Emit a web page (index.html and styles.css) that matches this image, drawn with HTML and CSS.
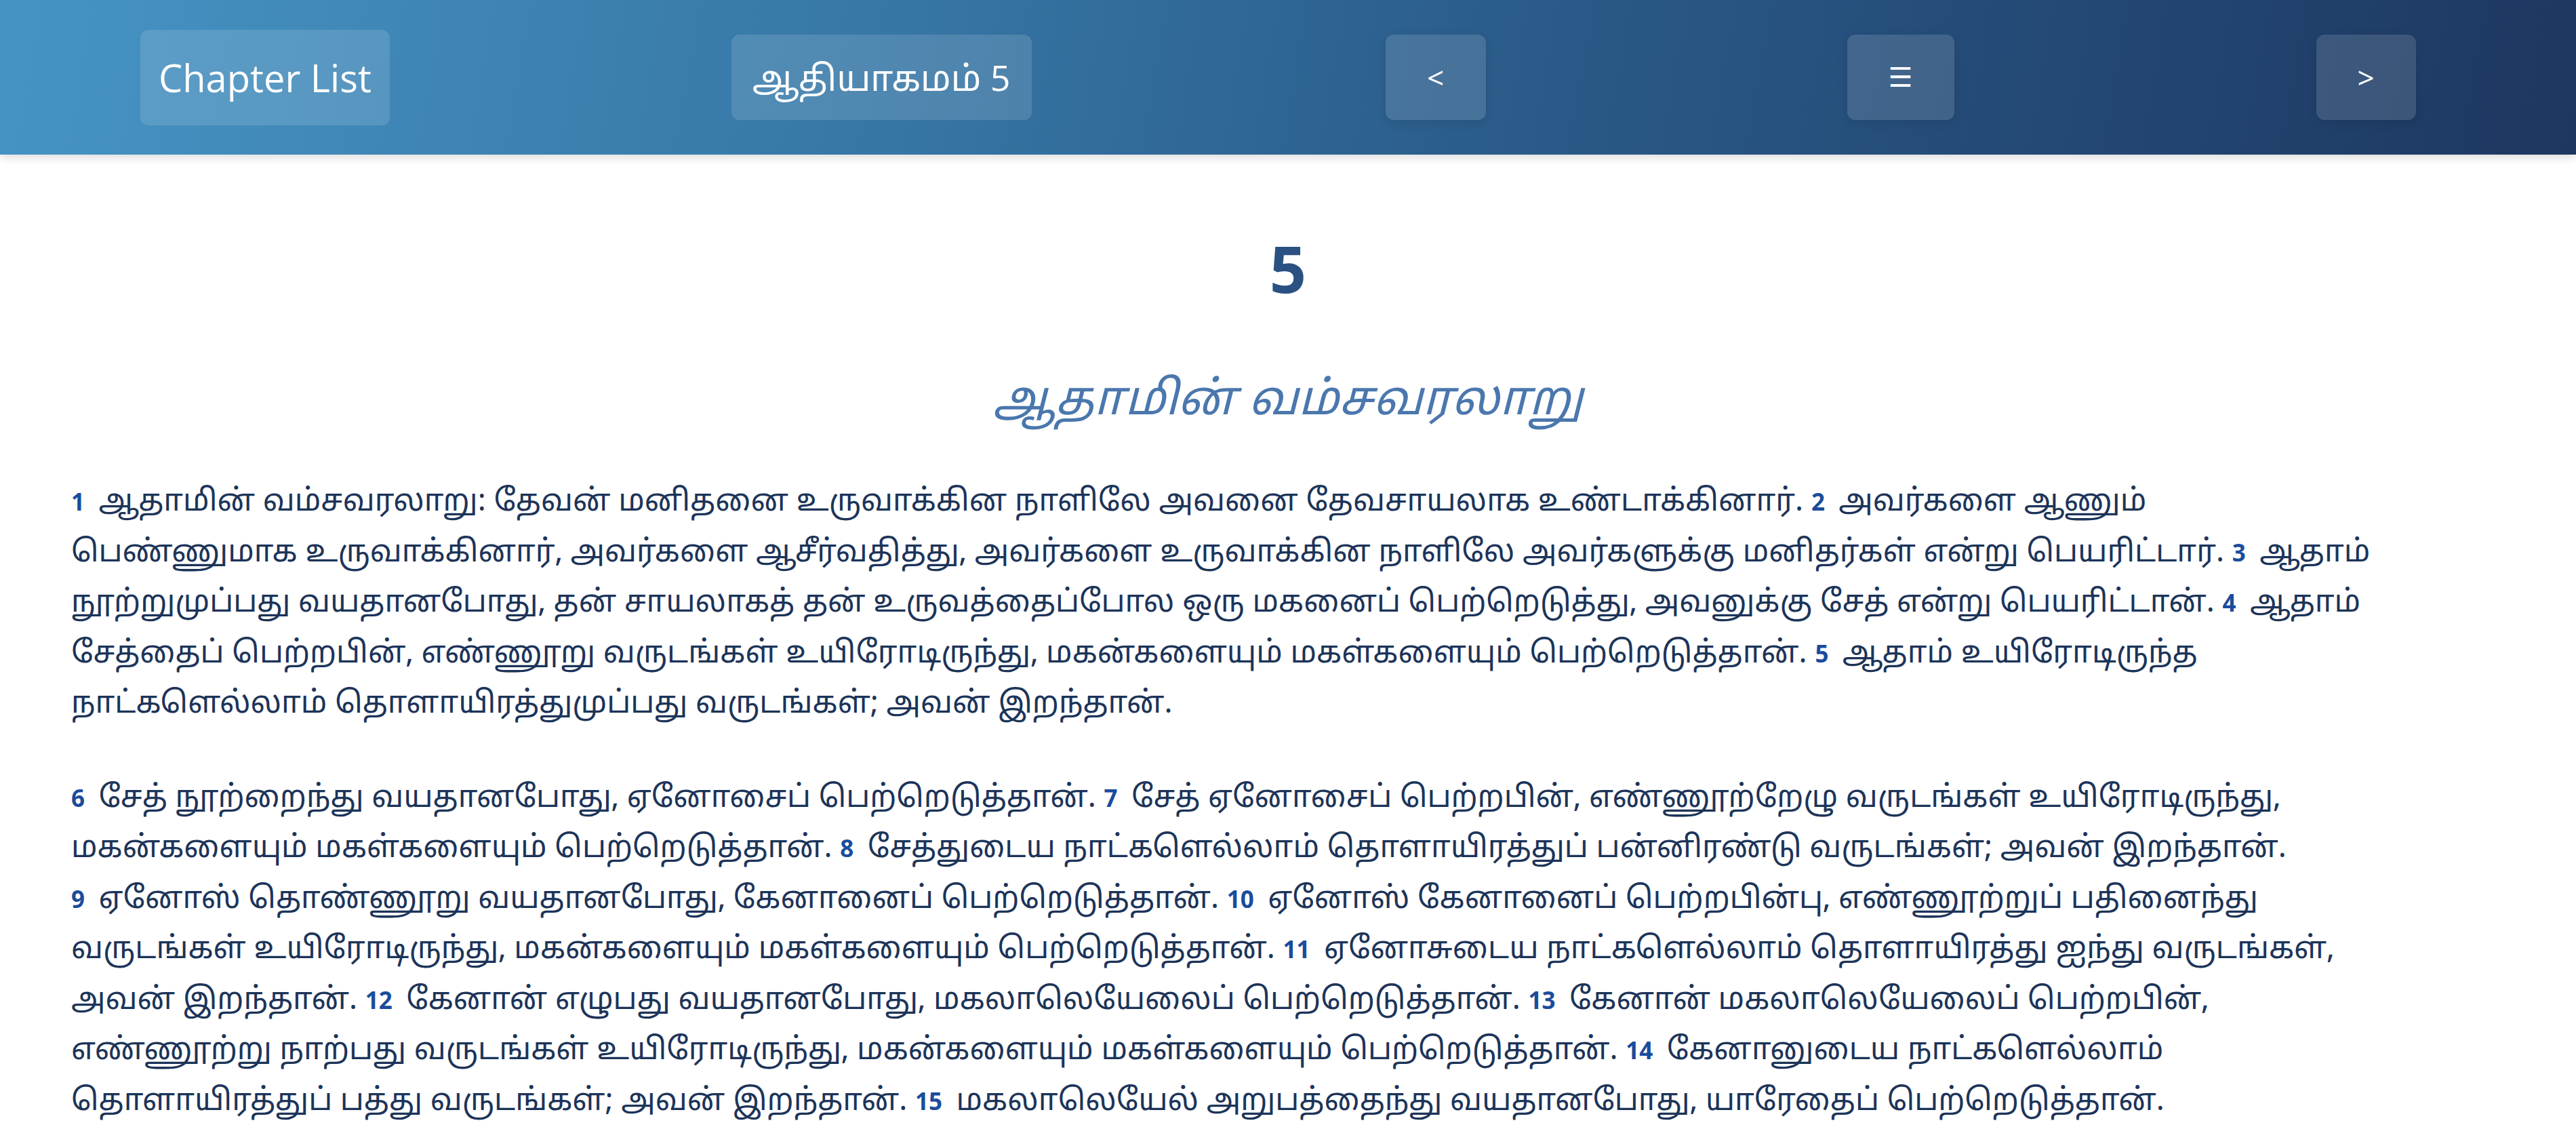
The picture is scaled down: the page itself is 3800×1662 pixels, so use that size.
FILE: index.html
```html
<!DOCTYPE html>
<html lang="ta">
<head>
<meta charset="utf-8">
<title>ஆதியாகமம் 5</title>
<link rel="stylesheet" href="styles.css">
</head>
<body>
<header class="topbar">
  <a class="btn btn-list">Chapter List</a>
  <div class="btn btn-title">ஆதியாகமம் 5</div>
  <a class="btn btn-nav btn-prev">&lt;</a>
  <a class="btn btn-nav btn-menu">☰</a>
  <a class="btn btn-nav btn-next">&gt;</a>
</header>
<main class="chapter">
  <h1 class="chapter-num">5</h1>
  <h2 class="chapter-title">ஆதாமின் வம்சவரலாறு</h2>
  <p class="para"><span class="vn">1</span> ஆதாமின் வம்சவரலாறு: தேவன் மனிதனை உருவாக்கின நாளிலே அவனை தேவசாயலாக உண்டாக்கினார். <span class="vn">2</span> அவர்களை ஆணும்<br>பெண்ணுமாக உருவாக்கினார், அவர்களை ஆசீர்வதித்து, அவர்களை உருவாக்கின நாளிலே அவர்களுக்கு மனிதர்கள் என்று பெயரிட்டார். <span class="vn">3</span> ஆதாம்<br>நூற்றுமுப்பது வயதானபோது, தன் சாயலாகத் தன் உருவத்தைப்போல ஒரு மகனைப் பெற்றெடுத்து, அவனுக்கு சேத் என்று பெயரிட்டான். <span class="vn">4</span> ஆதாம்<br>சேத்தைப் பெற்றபின், எண்ணூறு வருடங்கள் உயிரோடிருந்து, மகன்களையும் மகள்களையும் பெற்றெடுத்தான். <span class="vn">5</span> ஆதாம் உயிரோடிருந்த<br>நாட்களெல்லாம் தொளாயிரத்துமுப்பது வருடங்கள்; அவன் இறந்தான்.</p>
  <p class="para"><span class="vn">6</span> சேத் நூற்றைந்து வயதானபோது, ஏனோசைப் பெற்றெடுத்தான். <span class="vn">7</span> சேத் ஏனோசைப் பெற்றபின், எண்ணூற்றேழு வருடங்கள் உயிரோடிருந்து,<br>மகன்களையும் மகள்களையும் பெற்றெடுத்தான். <span class="vn">8</span> சேத்துடைய நாட்களெல்லாம் தொளாயிரத்துப் பன்னிரண்டு வருடங்கள்; அவன் இறந்தான்.<br><span class="vn">9</span> ஏனோஸ் தொண்ணூறு வயதானபோது, கேனானைப் பெற்றெடுத்தான். <span class="vn">10</span> ஏனோஸ் கேனானைப் பெற்றபின்பு, எண்ணூற்றுப் பதினைந்து<br>வருடங்கள் உயிரோடிருந்து, மகன்களையும் மகள்களையும் பெற்றெடுத்தான். <span class="vn">11</span> ஏனோசுடைய நாட்களெல்லாம் தொளாயிரத்து ஐந்து வருடங்கள்,<br>அவன் இறந்தான். <span class="vn">12</span> கேனான் எழுபது வயதானபோது, மகலாலெயேலைப் பெற்றெடுத்தான். <span class="vn">13</span> கேனான் மகலாலெயேலைப் பெற்றபின்,<br>எண்ணூற்று நாற்பது வருடங்கள் உயிரோடிருந்து, மகன்களையும் மகள்களையும் பெற்றெடுத்தான். <span class="vn">14</span> கேனானுடைய நாட்களெல்லாம்<br>தொளாயிரத்துப் பத்து வருடங்கள்; அவன் இறந்தான். <span class="vn">15</span> மகலாலெயேல் அறுபத்தைந்து வயதானபோது, யாரேதைப் பெற்றெடுத்தான்.<br><span class="vn">16</span> மகலாலெயேல் யாரேதைப் பெற்றபின், எண்ணூற்றுமுப்பது வருடங்கள் உயிரோடிருந்து, மகன்களையும் மகள்களையும் பெற்றெடுத்தான்.<br><span class="vn">17</span> மகலாலெயேலுடைய நாட்களெல்லாம் எண்ணூற்றுத் தொண்ணூற்றைந்து வருடங்கள்; அவன் இறந்தான்.</p>
</main>
</body>
</html>
```

FILE: styles.css
```css
* { box-sizing: border-box; }

html, body {
  margin: 0;
  padding: 0;
  background: #ffffff;
}

body {
  font-family: "Open Sans", "Noto Sans", "Noto Sans Tamil", sans-serif;
  color: #1c3459;
}

.topbar {
  position: relative;
  z-index: 2;
  height: 228px;
  display: flex;
  align-items: center;
  padding: 0 0 0 207px;
  background: linear-gradient(100deg, #4694c4 0%, #3676a5 35%, #2a5a88 60%, #1d3760 100%);
  box-shadow: 0 3px 14px rgba(0, 0, 0, 0.16);
}

.btn {
  display: block;
  flex: none;
  color: #ffffff;
  background: rgba(255, 255, 255, 0.13);
  border-radius: 12px;
  text-align: center;
  white-space: nowrap;
  text-decoration: none;
}

.btn-list {
  font-size: 56px;
  line-height: 80px;
  padding: 30px 27px 31px;
}

.btn-title {
  margin-left: 504px;
  font-size: 52px;
  line-height: 64px;
  padding: 31px 31px;
}

.btn-nav {
  width: 148px;
  font-size: 44px;
  line-height: 64px;
  padding: 31px 0;
  box-shadow: 0 4px 16px rgba(0, 0, 0, 0.1);
}

.btn-prev { margin-left: 522px; }

.btn-menu {
  width: 158px;
  margin-left: 533px;
  font-family: "DejaVu Sans", sans-serif;
  font-size: 40px;
}

.btn-next {
  width: 147px;
  margin-left: 534px;
}

.chapter {
  padding: 113px 105px 40px;
}

.chapter-num {
  margin: 0 0 99px;
  text-align: center;
  font-size: 95px;
  line-height: 108px;
  font-weight: 700;
  color: #2b5182;
}

.chapter-title {
  margin: 0 0 65px;
  text-align: center;
  font-family: "Noto Sans Tamil", "Open Sans", sans-serif;
  font-size: 70px;
  line-height: 92px;
  font-weight: 400;
  font-style: italic;
  color: #4a77ad;
}

.para {
  margin: 0 0 64px;
  font-family: "Noto Sans Tamil", "Open Sans", sans-serif;
  font-size: 45px;
  line-height: 74.5px;
  white-space: nowrap;
}

.vn {
  font-family: "Open Sans", sans-serif;
  font-size: 35px;
  line-height: 1;
  font-weight: 700;
  color: #1a4c9c;
  margin-right: 0.25em;
}
```
